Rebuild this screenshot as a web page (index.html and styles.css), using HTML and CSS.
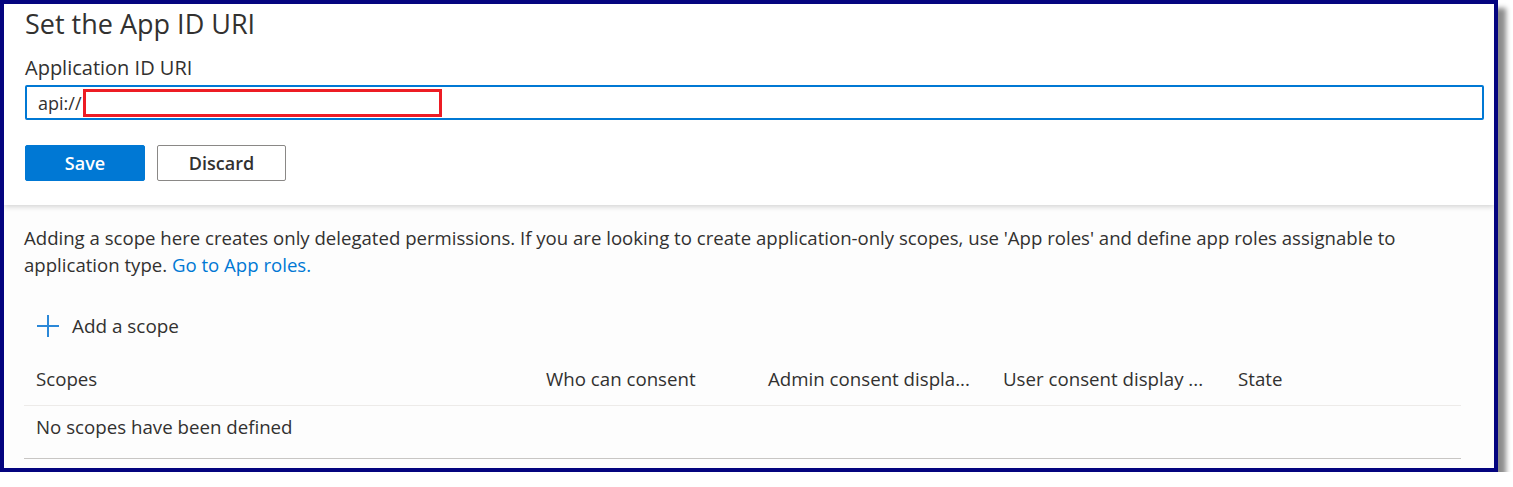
FILE: index.html
```html
<!DOCTYPE html>
<html lang="en">
<head>
<meta charset="utf-8">
<title>Set the App ID URI</title>
<link rel="stylesheet" href="styles.css">
</head>
<body>
<div class="frame">
  <section class="top">
    <h1 class="title">Set the App ID URI</h1>
    <label class="label">Application ID URI</label>
    <div class="input">
      <span class="prefix">api://</span>
      <span class="redact"></span>
    </div>
    <div class="buttons">
      <button class="btn primary">Save</button>
      <button class="btn secondary">Discard</button>
    </div>
  </section>
  <section class="bottom">
    <p class="info">Adding a scope here creates only delegated permissions. If you are looking to create application-only scopes, use 'App roles' and define app roles assignable to application type. <a class="link">Go to App roles.</a></p>
    <div class="add">
      <svg class="plus" width="22" height="22" viewBox="0 0 22 22"><path d="M11 0V22M0 11H22" stroke="#2b88d8" stroke-width="2"/></svg>
      <span>Add a scope</span>
    </div>
    <div class="table">
      <div class="row head">
        <div class="c1">Scopes</div>
        <div class="c2">Who can consent</div>
        <div class="c3">Admin consent displa...</div>
        <div class="c4">User consent display ...</div>
        <div class="c5">State</div>
      </div>
      <div class="row body">
        <div class="c1 wide">No scopes have been defined</div>
      </div>
    </div>
  </section>
</div>
</body>
</html>
```
FILE: styles.css
```css
html, body {
  margin: 0;
  padding: 0;
  background: #ffffff;
}
body {
  font-family: "Open Sans", "Noto Sans", sans-serif;
  color: #323130;
}
.frame {
  box-sizing: border-box;
  width: 1498px;
  height: 472px;
  border: 4px solid #04047f;
  box-shadow: 8px 8px 5px rgba(0, 0, 0, 0.45);
  background: #ffffff;
  display: flex;
  flex-direction: column;
  overflow: hidden;
}
.top {
  height: 201px;
  box-sizing: border-box;
  padding: 3px 10px 0 21px;
  background: #ffffff;
  box-shadow: 0 2px 5px rgba(0, 0, 0, 0.16);
  position: relative;
  z-index: 1;
}
.title {
  margin: 0;
  font-size: 27px;
  font-weight: 400;
  line-height: 34px;
  color: #323130;
}
.label {
  display: block;
  margin-top: 14px;
  font-size: 20px;
  line-height: 26px;
  color: #323130;
}
.input {
  margin-top: 4px;
  height: 35px;
  box-sizing: border-box;
  border: 2px solid #0078d4;
  border-radius: 2px;
  display: flex;
  align-items: center;
  padding-left: 11px;
}
.prefix {
  font-size: 18px;
  color: #323130;
}
.redact {
  box-sizing: border-box;
  width: 359px;
  height: 28px;
  border: 3px solid #ed1c24;
  background: #ffffff;
  margin-left: 1px;
}
.buttons {
  margin-top: 25px;
  display: flex;
  gap: 12px;
}
.btn {
  box-sizing: border-box;
  height: 36px;
  border-radius: 2px;
  font-family: "Open Sans", "Noto Sans", sans-serif;
  font-size: 18px;
  font-weight: 600;
  padding: 0;
}
.primary {
  width: 120px;
  background: #0078d4;
  color: #ffffff;
  border: 1px solid #0078d4;
}
.secondary {
  width: 129px;
  background: #ffffff;
  color: #323130;
  border: 1px solid #8a8886;
}
.bottom {
  flex: 1;
  background: #fdfdfd;
  padding: 19px 33px 0 20px;
}
.info {
  margin: 0;
  font-size: 18.6px;
  line-height: 27px;
  color: #323130;
}
.link {
  color: #0078d4;
}
.add {
  margin-top: 35px;
  margin-left: 13px;
  display: flex;
  align-items: center;
  gap: 13px;
  font-size: 18.9px;
  color: #323130;
}
.table {
  margin-top: 12px;
}
.row {
  display: flex;
  font-size: 18.7px;
  color: #323130;
  padding-left: 12px;
}
.head {
  height: 55px;
  box-sizing: border-box;
  align-items: center;
  border-bottom: 1px solid #edebe9;
}
.body {
  height: 53px;
  box-sizing: border-box;
  align-items: center;
  padding-bottom: 12px;
  border-bottom: 1px solid #c8c6c4;
}
.c1 { width: 510px; }
.c2 { width: 222px; }
.c3 { width: 235px; }
.c4 { width: 235px; }
.c5 { width: 100px; }
.wide { width: auto; }
```
